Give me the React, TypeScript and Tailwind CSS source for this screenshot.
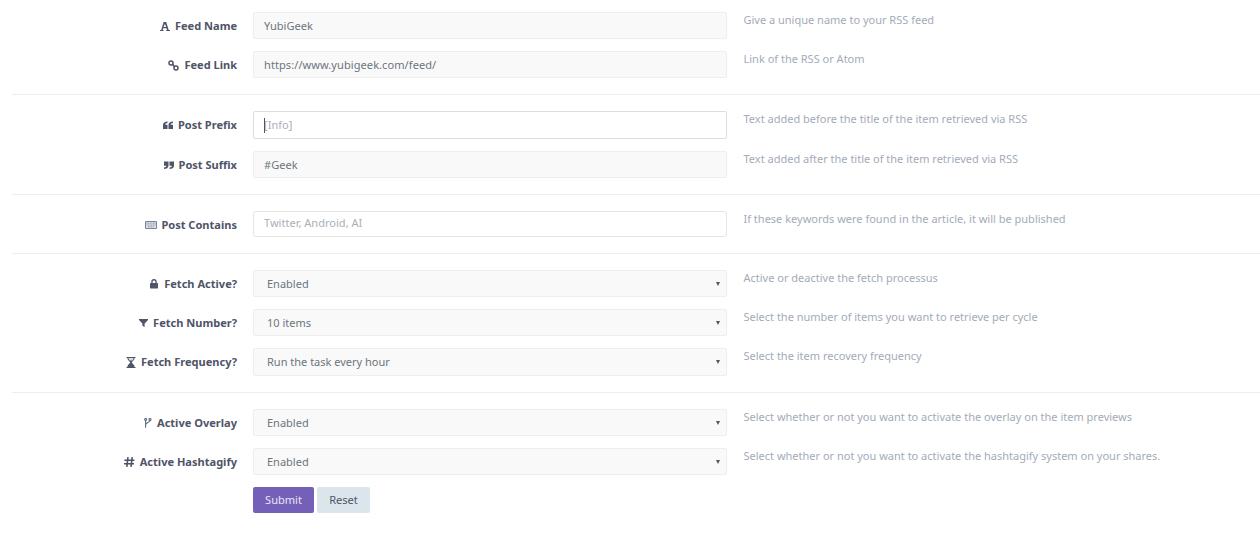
import React from 'react';

interface RowProps {
  icon: React.ReactNode;
  label: string;
  help: string;
  className?: string;
  children: React.ReactNode;
}

function Row({ icon, label, help, className, children }: RowProps) {
  return (
    <div className={`flex ${className ?? ''}`}>
      <label className="w-[225px] pt-[5px] flex items-start justify-end gap-[5px] font-bold text-[#4f5467] text-[11.05px] leading-[18px]">
        <span className="h-[18px] flex items-center">{icon}</span>
        {label}
      </label>
      <div className="w-[474px] ml-[16px]">{children}</div>
      <p className="ml-[16.5px] text-[11px] leading-[16px] text-[#a3abb8]">{help}</p>
    </div>
  );
}

function TextField({ value, wide }: { value: string; wide?: boolean }) {
  return (
    <input
      readOnly
      value={value}
      className={`block w-full h-[27px] px-[10px] bg-[#f9f9f9] border border-[#eeeeee] rounded-[2px] text-[11.05px] text-[#6c757d] outline-none ${wide ? 'tracking-[0.06px]' : ''}`}
    />
  );
}

function SelectField({ value, tall }: { value: string; tall?: boolean }) {
  return (
    <div className={`relative w-full ${tall ? 'h-[28px]' : 'h-[27px]'} bg-[#f9f9f9] border border-[#eeeeee] rounded-[2px] flex items-center pl-[13px] pt-px text-[11px] text-[#6c757d]`}>
      {value}
      <span className="absolute right-[6px] top-1/2 -translate-y-1/2 w-0 h-0 border-l-[2px] border-r-[2px] border-t-[4px] border-l-transparent border-r-transparent border-t-[#555555]" />
    </div>
  );
}

function FontIcon() {
  return (
    <svg width="10" height="9" viewBox="0 0 10 9" fill="#4f5467">
      <path fillRule="evenodd" d="M3.6 0h2.6l2.5 7.9H10V9H6.2V7.9H7L6.5 6.2H3.2L2.7 7.9h.9V9H0V7.9h1.2ZM4.9 1.8 3.6 5.1h2.6Z" />
    </svg>
  );
}

function LinkIcon() {
  return (
    <svg width="11" height="11" viewBox="0 0 11 11" fill="none" stroke="#4f5467" strokeWidth="1.5">
      <circle cx="3" cy="3" r="2" />
      <circle cx="8" cy="8" r="2" />
      <path d="M4.4 4.4 6.6 6.6" />
    </svg>
  );
}

function QuoteIcon({ flip }: { flip?: boolean }) {
  return (
    <svg width="10" height="8.5" viewBox="0 0 10.4 8" fill="#4f5467" className={flip ? 'rotate-180' : ''}>
      <path d="M4.7 0v1.6C3.1 1.6 2.3 2.4 2.3 3.4h2.4V8H0V3.4C0 1.3 2 0 4.7 0Z" />
      <path d="M10.4 0v1.6C8.8 1.6 8 2.4 8 3.4h2.4V8H5.7V3.4C5.7 1.3 7.7 0 10.4 0Z" />
    </svg>
  );
}

function KeyboardIcon() {
  return (
    <svg width="12" height="8" viewBox="0 0 12 8" className="-mr-px">
      <rect width="12" height="8" rx="1" fill="#76859c" />
      <rect x="1" y="1" width="10" height="6" fill="#dfe4ea" />
      <path d="M1.5 2.2h9M1.5 4h9M3 5.8h6" stroke="#76859c" strokeWidth="0.9" strokeDasharray="1 0.6" />
    </svg>
  );
}

function LockIcon() {
  return (
    <svg width="8" height="9.5" viewBox="0 0 8 9.5" fill="#4f5467" className="mr-px">
      <path fillRule="evenodd" d="M1.3 4V2.8a2.7 2.7 0 0 1 5.4 0V4h.6c.4 0 .7.3.7.7v4.1c0 .4-.3.7-.7.7H.7a.7.7 0 0 1-.7-.7V4.7C0 4.3.3 4 .7 4ZM2.6 4h2.8V2.8a1.4 1.4 0 0 0-2.8 0Z" />
    </svg>
  );
}

function FilterIcon() {
  return (
    <svg width="9" height="8" viewBox="0 0 9 8" fill="#4f5467">
      <path d="M0 0h9v1L5.6 4.4V8L3.4 6.8V4.4L0 1Z" />
    </svg>
  );
}

function HourglassIcon() {
  return (
    <svg width="10" height="11" viewBox="0 0 10 11" fill="#4f5467">
      <path d="M.5 0h9v1h-.9c0 2-2 3.4-2.9 4.5C6.600 6.600 8.600 8 8.600 10h.9v1h-9v-1h.9c0-2 2-3.400 2.900-4.500C3.400 4.400 1.400 3 1.400 1H.5Z" />
      <path d="M2.400 1h5.200c-.1 1-.5 1.700-1 2.400H3.400c-.5-.7-.9-1.400-1-2.400Z" fill="#d5d9e0" />
    </svg>
  );
}

function ForkIcon() {
  return (
    <svg width="7.5" height="10" viewBox="0 0 7.5 10" fill="none" stroke="#5f6d84" strokeWidth="1.1">
      <circle cx="1.6" cy="1.5" r="1" />
      <circle cx="6" cy="1.5" r="1" />
      <path d="M1.6 2.5V9.8M6 2.500C6 4.500 1.600 4.500 1.600 6.800" />
    </svg>
  );
}

function HashIcon() {
  return (
    <svg width="10.5" height="10" viewBox="0 0 10.5 10" fill="none" stroke="#4f5467" strokeWidth="1.6">
      <path d="M4 .2 2.800 9.800M8.200 .2 7 9.800M.4 3.200h10M0 6.800h10" />
    </svg>
  );
}

export default function App() {
  return (
    <div className="w-[1260px] h-[539px] bg-white overflow-hidden pt-[12px] font-['Noto_Sans','Open_Sans',sans-serif]">
      <div className="pl-[12px]">
        <Row icon={<FontIcon />} label="Feed Name" help="Give a unique name to your RSS feed">
          <TextField value="YubiGeek" />
        </Row>
        <Row className="mt-[12px]" icon={<LinkIcon />} label="Feed Link" help="Link of the RSS or Atom">
          <TextField value="https://www.yubigeek.com/feed/" wide />
        </Row>
        <hr className="mt-[16px] border-t border-[#eeeeee]" />
        <Row className="mt-[16px]" icon={<QuoteIcon />} label="Post Prefix" help="Text added before the title of the item retrieved via RSS">
          <div className="relative h-[28px] bg-white border border-[#dddddd] rounded-[2px] flex items-center pl-[10px] text-[11.05px] text-[#a9afb8]">
            <span className="absolute left-[10px] top-[6px] w-px h-[15px] bg-[#555555]" />
            [Info]
          </div>
        </Row>
        <Row className="mt-[12px]" icon={<QuoteIcon flip />} label="Post Suffix" help="Text added after the title of the item retrieved via RSS">
          <TextField value="#Geek" />
        </Row>
        <hr className="mt-[16px] border-t border-[#eeeeee]" />
        <Row className="mt-[16px]" icon={<KeyboardIcon />} label="Post Contains" help="If these keywords were found in the article, it will be published">
          <input
            readOnly
            placeholder="Twitter, Android, AI"
            className="block w-full h-[26px] px-[10px] pb-[4px] bg-white border border-[#e4e4e4] rounded-[3px] text-[11.05px] placeholder:text-[#a9afb8] outline-none"
          />
        </Row>
        <hr className="mt-[16px] border-t border-[#eeeeee]" />
        <Row className="mt-[16px]" icon={<LockIcon />} label="Fetch Active?" help="Active or deactive the fetch processus">
          <SelectField value="Enabled" />
        </Row>
        <Row className="mt-[12px]" icon={<FilterIcon />} label="Fetch Number?" help="Select the number of items you want to retrieve per cycle">
          <SelectField value="10 items" />
        </Row>
        <Row className="mt-[12px]" icon={<HourglassIcon />} label="Fetch Frequency?" help="Select the item recovery frequency">
          <SelectField value="Run the task every hour" tall />
        </Row>
        <hr className="mt-[16px] border-t border-[#eeeeee]" />
        <Row className="mt-[16px]" icon={<ForkIcon />} label="Active Overlay" help="Select whether or not you want to activate the overlay on the item previews">
          <SelectField value="Enabled" />
        </Row>
        <Row className="mt-[12px]" icon={<HashIcon />} label="Active Hashtagify" help="Select whether or not you want to activate the hashtagify system on your shares.">
          <SelectField value="Enabled" />
        </Row>
        <div className="mt-[12px] ml-[241px] flex gap-[3px] text-[11.05px]">
          <button className="w-[61px] h-[26px] bg-[#7460b8] text-[#e8e6f2] rounded-[2px]">Submit</button>
          <button className="w-[53px] h-[26px] bg-[#dae5ec] text-[#4f5467] rounded-[2px]">Reset</button>
        </div>
      </div>
    </div>
  );
}
